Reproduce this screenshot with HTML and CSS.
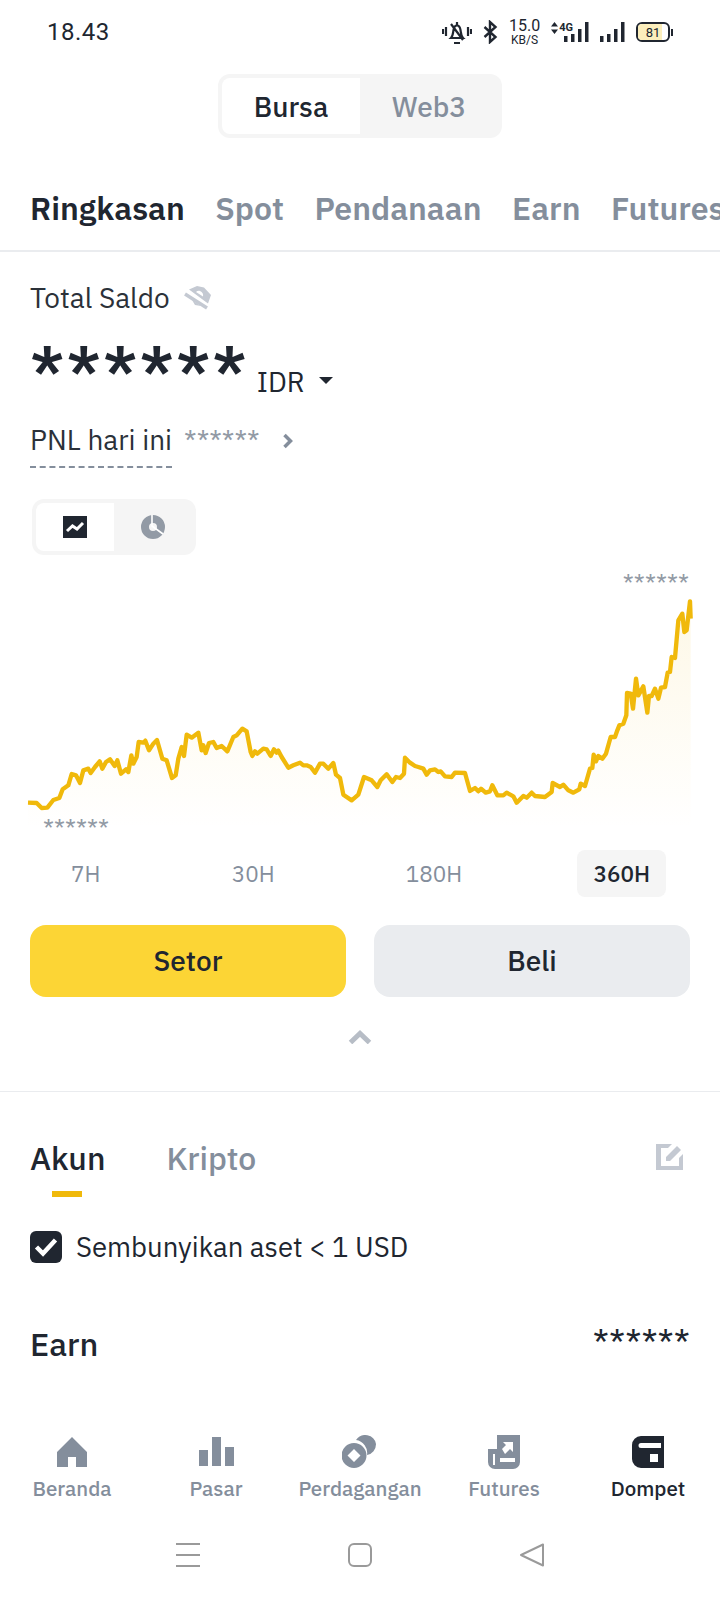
FILE: index.html
```html
<!DOCTYPE html>
<html lang="en">

<head>
    <meta charset="UTF-8">
    <meta name="viewport" content="width=device-width, initial-scale=1.0">
    <title>Dompet</title>
    <link rel="stylesheet" href="styles.css">
</head>

<body>
    <div class="page">

        <!-- Status bar -->
        <div class="status-bar">
            <span class="clock">18.43</span>
            <div class="status-icons">
                <svg width="30" height="26" viewBox="0 0 30 26"><path d="M1 10v5M4 8v9M26 8v9M29 10v5" stroke="#202630" stroke-width="2.200" fill="none"/><path d="M9 19c2-2 2-5 2.500-8 .5-3 2-4.500 3.500-4.500s3 1.500 3.500 4.500c.5 3 .5 6 2.500 8zM12 24h6M15 3v3M9 5l12 16" stroke="#202630" stroke-width="2.200" fill="none"/></svg>
                <svg width="15" height="24" viewBox="0 0 15 24"><path d="M1.500 7l11 10-5.500 5V2l5.500 5-11 10" stroke="#202630" stroke-width="2.400" fill="none"/></svg>
                <div class="speed"><span>15.0</span><small>KB/S</small></div>
                <div class="net">
                    <svg class="updown" width="7" height="12" viewBox="0 0 7 12"><path d="M3.500 0L7 4.500H0zM3.500 12L0 7.500h7z" fill="#202630"/></svg>
                    <span class="four-g">4G</span>
                    <svg width="25" height="20" viewBox="0 0 25 20"><path d="M0 14h3.500v6H0zM7 12h3.500v8H7zM14 7h3.500v13H14zM21 0h3.500v20H21z" fill="#202630"/></svg>
                </div>
                <svg width="25" height="20" viewBox="0 0 25 20"><path d="M0 14h3.500v6H0zM7 12h3.500v8H7zM14 7h3.500v13H14zM21 0h3.500v20H21z" fill="#202630"/></svg>
                <div class="battery"><span class="battery-body"><span class="battery-fill"></span><span class="battery-num">81</span></span><span class="battery-tip"></span></div>
            </div>
        </div>

        <!-- Bursa / Web3 switch -->
        <div class="switch-row">
            <div class="switch">
                <span class="switch-item active">Bursa</span>
                <span class="switch-item">Web3</span>
            </div>
        </div>

        <!-- Wallet tabs -->
        <div class="wallet-tabs">
            <span class="active">Ringkasan</span>
            <span>Spot</span>
            <span>Pendanaan</span>
            <span>Earn</span>
            <span>Futures</span>
        </div>

        <div class="summary">
            <div class="balance-label">
                <span>Total Saldo</span>
                <svg width="28" height="24" viewBox="0 0 28 24"><path d="M1 8l22 14" stroke="#c4c9d2" stroke-width="3.500" fill="none"/><path fill-rule="evenodd" d="M5 3.500L13 0l7 1.500L27 9l-3 8.500zM12 6l7 4.500c.5-2.500-.5-4.500-3-5.500-1.500-.5-3 0-4 1z" fill="#c4c9d2"/><path d="M8 14l9 6-6-1z" fill="#c4c9d2"/></svg>
            </div>
            <div class="balance-row">
                <span class="balance">******</span>
                <span class="currency">IDR</span>
                <span class="caret"></span>
            </div>
            <div class="pnl-row">
                <span class="pnl-label">PNL hari ini</span>
                <span class="pnl-value">******</span>
                <svg width="12" height="16" viewBox="0 0 12 16"><path d="M2.500 2l6 6-6 6" stroke="#848e9c" stroke-width="3.500" fill="none"/></svg>
            </div>
            <div class="chart-switch">
                <span class="chart-btn active">
                    <svg width="24" height="22" viewBox="0 0 24 22"><rect width="24" height="22" fill="#202630"/><path d="M4 15l5.500-5 4.500 3 6-6" stroke="#fff" stroke-width="3" fill="none"/></svg>
                </span>
                <span class="chart-btn">
                    <svg width="24" height="24" viewBox="0 0 24 24"><circle cx="12" cy="12" r="8" stroke="#929aa5" stroke-width="8" fill="none"/><path d="M11 0v11l11 8" stroke="#fff" stroke-width="1.600" fill="none"/></svg>
                </span>
            </div>
        </div>

        <!-- Balance chart -->
        <div class="chart">
            <span class="chart-max">******</span>
            <svg class="chart-line" width="720" height="270" viewBox="0 0 2160 810">
                <defs>
                    <linearGradient id="chartFill" x1="0" y1="0" x2="0" y2="1">
                        <stop offset="0" stop-color="#f0b90b" stop-opacity="0.1"/>
                        <stop offset="1" stop-color="#f0b90b" stop-opacity="0"/>
                    </linearGradient>
                </defs>
                <path id="chartArea" fill="url(#chartFill)"/>
                <path id="chartStroke" fill="none" stroke="#f0b90b" stroke-width="13" stroke-linejoin="round"/>
            </svg>
            <span class="chart-min">******</span>
        </div>

        <div class="ranges">
            <span>7H</span>
            <span>30H</span>
            <span>180H</span>
            <span class="active">360H</span>
        </div>

        <div class="actions">
            <button class="primary">Setor</button>
            <button>Beli</button>
        </div>

        <div class="collapse">
            <svg width="24" height="14" viewBox="0 0 24 14"><path d="M2.500 12.500L12 3.500l9.500 9" stroke="#b7bdc6" stroke-width="5" fill="none"/></svg>
        </div>

        <!-- Account list -->
        <div class="account-tabs">
            <div class="account-tab active">Akun</div>
            <div class="account-tab">Kripto</div>
            <svg class="edit-icon" width="28" height="28" viewBox="0 0 28 28"><path d="M0 1h16l-4 4H5v18h18v-8l4-4v16H0zM10 18v-4L21 3l4 4-11 11z" fill="#c4c9d2"/></svg>
        </div>

        <div class="hide-small">
            <span class="checkbox">
                <svg width="24" height="20" viewBox="0 0 24 20"><path d="M2.500 10l6.500 6.500L21.500 3" stroke="#fff" stroke-width="4.500" fill="none"/></svg>
            </span>
            <span>Sembunyikan aset &lt; 1 USD</span>
        </div>

        <div class="earn-row">
            <span>Earn</span>
            <span class="earn-value">******</span>
        </div>

        <!-- Bottom navigation -->
        <div class="bottom-nav">
            <div class="nav-item">
                <svg width="32" height="32" viewBox="0 0 32 32"><path d="M16 1L1 16v15h11V21h8v10h11V16z" fill="#848e9c"/></svg>
                <span>Beranda</span>
            </div>
            <div class="nav-item">
                <svg width="36" height="32" viewBox="0 0 36 32"><path d="M1 14h9v16H1zM14 1h9v29h-9zM27 11h9v19h-9z" fill="#848e9c"/></svg>
                <span>Pasar</span>
            </div>
            <div class="nav-item">
                <svg width="36" height="34" viewBox="0 0 36 34"><path d="M14 5a11 11 0 0 1 20 4 11 11 0 0 1-9 11A13 13 0 0 0 14 5z" fill="#848e9c"/><path fill-rule="evenodd" d="M12 8a12.500 12.500 0 1 1 0 25 12.500 12.500 0 0 1 0-25zm0 6l-6.500 6.500L12 27l6.500-6.500z" fill="#848e9c"/></svg>
                <span>Perdagangan</span>
            </div>
            <div class="nav-item">
                <svg width="32" height="34" viewBox="0 0 32 34"><path fill-rule="evenodd" d="M9 0h23v27a7 7 0 0 1-7 7H7a7 7 0 0 1-7-7V14h9zM5 19v11h2V19zm9-5l4-4-3-3h10v10l-3-3-5 5zm-2 9v4h15v-4z" fill="#848e9c"/></svg>
                <span>Futures</span>
            </div>
            <div class="nav-item active">
                <svg width="32" height="32" viewBox="0 0 32 32"><path fill-rule="evenodd" d="M9 0h23v32H9a9 9 0 0 1-9-9V9a9 9 0 0 1 9-9zm0 7a2.500 2.500 0 0 0 0 5h20V7zm9 11v8h8v-8z" fill="#202630"/></svg>
                <span>Dompet</span>
            </div>
        </div>

        <!-- Android buttons -->
        <div class="system-nav">
            <svg width="24" height="24" viewBox="0 0 24 24"><path d="M0 1h24M0 12h24M0 23h24" stroke="#9a9a9a" stroke-width="2"/></svg>
            <svg width="24" height="24" viewBox="0 0 24 24"><rect x="1" y="1" width="22" height="22" rx="5" stroke="#9a9a9a" stroke-width="2" fill="none"/></svg>
            <svg width="24" height="24" viewBox="0 0 24 24"><path d="M23 1.500v21L1 12z" stroke="#9a9a9a" stroke-width="2" stroke-linejoin="round" fill="none"/></svg>
        </div>
    </div>

    <script>
        // Line traced from the balance history, in 3x pixels of the picture
        const points = [
            [84,202],[110,203],[125,218],[142,217],[160,194],[178,188],[188,162],[205,150],[215,116],[228,120],[240,143],[250,105],[265,100],[272,113],[285,95],[299,78],[307,100],[318,80],[330,72],[344,92],[352,75],[363,115],[378,102],[385,110],[394,60],[400,85],[410,65],[416,20],[430,22],[436,16],[447,45],[460,25],[471,14],[487,70],[500,75],[516,128],[527,120],[535,70],[545,35],[552,62],[560,-2],[575,7],[595,-8],[605,45],[610,30],[617,53],[627,23],[640,20],[650,38],[665,32],[682,48],[700,5],[710,0],[727,-20],[740,-12],[752,50],[757,62],[765,48],[772,55],[790,40],[800,42],[812,62],[822,42],[830,52],[835,46],[845,65],[865,97],[880,90],[900,82],[910,90],[920,90],[932,95],[945,112],[960,85],[970,85],[985,100],[1000,83],[1008,118],[1020,128],[1030,178],[1055,195],
            [1075,178],[1092,125],[1115,135],[1132,155],[1142,135],[1160,117],[1177,140],[1188,125],[1200,128],[1212,115],[1215,67],[1230,82],[1245,92],[1255,95],[1270,100],[1280,118],[1290,105],[1305,102],[1315,110],[1322,108],[1335,123],[1355,125],[1365,112],[1395,113],[1410,167],[1425,158],[1435,168],[1443,160],[1457,172],[1470,168],[1477,150],[1492,180],[1510,180],[1520,172],[1540,183],[1550,202],[1570,182],[1580,187],[1595,172],[1605,182],[1635,185],[1655,170],[1658,143],[1680,155],[1690,148],[1705,165],[1720,172],[1738,162],[1742,145],[1755,152],[1770,100],[1777,98],[1781,58],[1788,78],[1795,62],[1807,70],[1818,55],[1832,5],[1845,5],[1852,-15],[1858,-30],[1870,-35],[1879,-60],[1881,-127],[1892,-125],[1899,-80],[1908,-170],[1915,-120],[1930,-147],[1942,-68],[1947,-118],[1955,-118],[1965,-140],[1975,-110],[1983,-143],[1995,-145],[2003,-188],[2010,-190],[2015,-235],[2025,-232],[2035,-345],[2047,-365],[2053,-310],[2060,-315],[2070,-402],[2072,-350]
        ];

        // Shift the traced points down into the svg's own box
        const shifted = points.map(p => [p[0], p[1] + 487]);
        const line = shifted.map(p => p.join(",")).join(" L");
        document.getElementById("chartStroke").setAttribute("d", "M" + line);
        document.getElementById("chartArea").setAttribute("d", "M" + line + " L2072,770 L84,770 Z");
    </script>
</body>

</html>
```

FILE: styles.css
```css
* {
    box-sizing: border-box;
}

body {
    margin: 0;
    background-color: white;
    color: #202630;
    font-family: "IBM Plex Sans", "Noto Sans", Arial, sans-serif;
}

.page {
    width: 720px;
    height: 1600px;
    overflow: hidden;
    display: flex;
    flex-direction: column;
}

.status-bar {
    height: 64px;
    padding: 0 47px 0 47px;
    display: flex;
    align-items: center;
    justify-content: space-between;
}

.clock {
    font-size: 24px;
    letter-spacing: 0.5px;
    font-family: "Roboto", sans-serif;
}

.status-icons {
    display: flex;
    align-items: center;
    gap: 11px;
}

.speed {
    display: flex;
    flex-direction: column;
    align-items: center;
    font-family: "Roboto", sans-serif;
    line-height: 1;
    font-size: 16px;
}

.speed small {
    font-size: 12px;
}

.net {
    display: flex;
    align-items: flex-end;
    font-family: "Roboto", sans-serif;
}

.updown {
    align-self: flex-start;
    margin-right: 1px;
}

.four-g {
    font-size: 11px;
    font-weight: bold;
    line-height: 12px;
    align-self: flex-start;
    margin-right: -9px;
}

.battery {
    display: flex;
    align-items: center;
}

.battery-body {
    position: relative;
    width: 34px;
    height: 20px;
    border: 2px solid #202630;
    border-radius: 6px;
    overflow: hidden;
    display: flex;
    align-items: center;
    justify-content: center;
}

.battery-fill {
    position: absolute;
    left: 0;
    top: 0;
    bottom: 0;
    width: 81%;
    background-color: #fbeebc;
}

.battery-num {
    position: relative;
    font-size: 13px;
    font-family: "Roboto", sans-serif;
}

.battery-tip {
    width: 2px;
    height: 7px;
    margin-left: 1px;
    background-color: #202630;
}

.switch-row {
    margin-top: 10px;
    display: flex;
    justify-content: center;
}

.switch {
    display: flex;
    width: 284px;
    height: 64px;
    padding: 4px;
    background-color: #f5f5f5;
    border-radius: 12px;
}

.switch-item {
    flex: 1;
    display: flex;
    align-items: center;
    justify-content: center;
    font-size: 28px;
    font-weight: 500;
    color: #848e9c;
}

.switch-item.active {
    background-color: white;
    color: #202630;
    border-radius: 8px 0 0 8px;
}

.wallet-tabs {
    margin-top: 42px;
    height: 72px;
    padding-top: 7px;
    padding-left: 30px;
    display: flex;
    gap: 30.500px;
    white-space: nowrap;
    font-size: 32px;
    font-weight: 600;
    color: #848e9c;
    border-bottom: 2px solid #eaecef;
    overflow: hidden;
}

.wallet-tabs .active {
    color: #202630;
}

.summary {
    padding: 0 30px;
}

.balance-label {
    margin-top: 27px;
    display: flex;
    align-items: center;
    gap: 14px;
    font-size: 28px;
    color: #2b3139;
}

.balance-row {
    margin-top: 21px;
    display: flex;
    align-items: baseline;
}

.balance {
    font-size: 62px;
    font-weight: 600;
    line-height: 64px;
    letter-spacing: 2px;
}

.currency {
    margin-left: 8px;
    font-size: 28px;
    font-weight: 400;
}

.caret {
    margin-left: 14px;
    width: 0;
    height: 0;
    border-left: 7px solid transparent;
    border-right: 7px solid transparent;
    border-top: 7px solid #202630;
    align-self: center;
    margin-top: 22px;
}

.pnl-row {
    margin-top: 20px;
    display: flex;
    align-items: center;
    font-size: 28px;
}

.pnl-row svg {
    margin-top: -8px;
}

.pnl-label {
    padding-bottom: 8px;
    border-bottom: 2px dashed #848e9c;
    color: #2b3139;
}

.pnl-value {
    margin-left: 12px;
    margin-right: 22px;
    color: #929aa5;
    font-size: 28px;
    margin-top: -8px;
}

.chart-switch {
    margin-top: 31px;
    margin-left: 2px;
    display: flex;
    width: 164px;
    height: 56px;
    padding: 4px;
    background-color: #f5f5f5;
    border-radius: 12px;
}

.chart-btn {
    flex: 1;
    display: flex;
    align-items: center;
    justify-content: center;
}

.chart-btn.active {
    background-color: white;
    border-radius: 8px 0 0 8px;
}

.chart {
    position: relative;
    height: 270px;
    margin-top: 18px;
}

.chart-line {
    position: absolute;
    left: 0;
    top: 0;
}

.chart-max {
    position: absolute;
    right: 31px;
    top: -6px;
    font-size: 24.500px;
    color: #929aa5;
}

.chart-min {
    position: absolute;
    left: 43px;
    bottom: -1px;
    font-size: 24.500px;
    color: #929aa5;
}

.ranges {
    margin-top: 7px;
    padding: 0 54px 0 55px;
    display: flex;
    justify-content: space-between;
    align-items: center;
    font-size: 22.500px;
    color: #848e9c;
}

.ranges span {
    padding: 9px 16px;
    border-radius: 8px;
}

.ranges .active {
    background-color: #f5f5f5;
    color: #202630;
    font-weight: 500;
}

.actions {
    margin-top: 28px;
    padding: 0 30px;
    display: flex;
    gap: 28px;
}

.actions button {
    flex: 1;
    height: 72px;
    padding-bottom: 2px;
    border: none;
    border-radius: 16px;
    background-color: #eaecef;
    color: #202630;
    font-family: inherit;
    font-size: 28px;
    font-weight: 500;
}

.actions .primary {
    background-color: #fcd535;
}

.collapse {
    height: 95px;
    padding-top: 33px;
    display: flex;
    justify-content: center;
    align-items: flex-start;
    border-bottom: 1px solid #eaecef;
}

.account-tabs {
    margin-top: 45px;
    padding: 0 36px 0 30px;
    display: flex;
    align-items: flex-start;
    gap: 61px;
    font-size: 32px;
    font-weight: 500;
    color: #848e9c;
}

.account-tab {
    position: relative;
    height: 58px;
}

.account-tab.active {
    color: #202630;
}

.account-tab.active::after {
    content: "";
    position: absolute;
    left: 22px;
    bottom: -2px;
    width: 30px;
    height: 6px;
    background-color: #f0b90b;
}

.edit-icon {
    margin-left: auto;
    margin-top: 6px;
}

.hide-small {
    margin-top: 34px;
    padding: 0 30px;
    display: flex;
    align-items: center;
    gap: 14px;
    font-size: 27.500px;
}

.checkbox {
    width: 32px;
    height: 32px;
    border-radius: 6px;
    background-color: #202630;
    display: flex;
    align-items: center;
    justify-content: center;
}

.earn-row {
    margin-top: 58px;
    padding: 0 30px;
    display: flex;
    justify-content: space-between;
    align-items: flex-start;
    font-size: 32.500px;
    font-weight: 500;
}

.earn-value {
    font-size: 36px;
    font-weight: 400;
    line-height: 40px;
}

.bottom-nav {
    margin-top: auto;
    margin-bottom: 8px;
    display: grid;
    grid-template-columns: repeat(5, 1fr);
}

.nav-item {
    display: flex;
    flex-direction: column;
    align-items: center;
    gap: 6px;
    font-size: 20.500px;
    font-weight: 500;
    color: #848e9c;
    white-space: nowrap;
}

.nav-item svg {
    height: 34px;
}

.nav-item.active {
    color: #202630;
}

.system-nav {
    height: 90px;
    padding-left: 176px;
    display: flex;
    align-items: center;
    gap: 148px;
}
```
